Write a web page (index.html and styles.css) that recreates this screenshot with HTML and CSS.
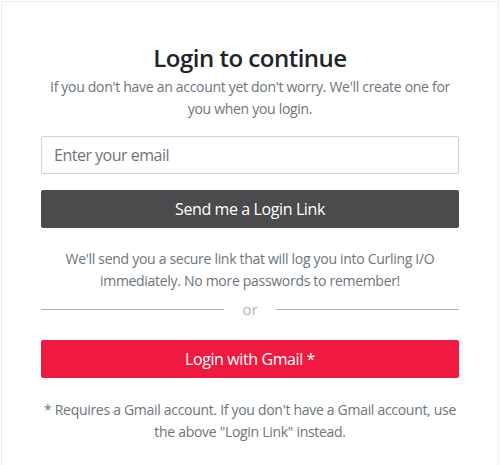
FILE: index.html
```html
<!DOCTYPE html>
<html lang="en">
<head>
<meta charset="utf-8">
<title>Login</title>
<link rel="stylesheet" href="styles.css">
</head>
<body>
<div class="card">
  <div class="login">
    <h1 class="title">Login to continue</h1>
    <p class="lead">If you don't have an account yet don't worry. We'll create one for you when you login.</p>
    <input class="email" type="email" placeholder="Enter your email">
    <button class="btn btn-dark" type="button">Send me a Login Link</button>
    <p class="note">We'll send you a secure link that will log you into Curling I/O immediately. No more passwords to remember!</p>
    <div class="divider"><span class="line"></span><span class="or">or</span><span class="line"></span></div>
    <button class="btn btn-red" type="button">Login with Gmail *</button>
    <p class="note foot">* Requires a Gmail account. If you don't have a Gmail account, use the above "Login Link" instead.</p>
  </div>
</div>
</body>
</html>
```
FILE: styles.css
```css
html, body {
  margin: 0;
  padding: 0;
  background: #ffffff;
}
body {
  padding: 1px 2px 0 1px;
  font-family: "Segoe UI", "Open Sans", "Noto Sans", sans-serif;
  color: #6c757d;
}
.card {
  border: 1px solid #e9ecef;
  border-bottom: none;
  height: 470px;
  box-sizing: border-box;
}
.login {
  width: 418px;
  margin: 0 auto;
  padding-top: 41px;
  display: flex;
  flex-direction: column;
  text-align: center;
}
.title {
  margin: 0 0 4px;
  font-size: 24px;
  line-height: 29px;
  font-weight: 600;
  letter-spacing: -0.5px;
  color: #212529;
}
.lead {
  margin: 0 0 16px;
  font-size: 14px;
  line-height: 22px;
  letter-spacing: -0.3px;
}
.email {
  height: 38px;
  box-sizing: border-box;
  border: 1px solid #ced4da;
  border-radius: 2px;
  padding: 0 12px;
  font-family: inherit;
  font-size: 16px;
  letter-spacing: -0.5px;
  color: #495057;
  margin: 0 0 16px;
  outline: none;
}
.email::placeholder {
  color: #6c757d;
}
.btn {
  height: 38px;
  border: none;
  border-radius: 2px;
  color: #ffffff;
  font-family: inherit;
  font-size: 16px;
  letter-spacing: -0.4px;
  cursor: pointer;
}
.btn-dark {
  background: #4b4b4d;
}
.btn-red {
  background: #f01a41;
}
.note {
  margin: 20px 0 6px;
  font-size: 14px;
  line-height: 22px;
  letter-spacing: -0.3px;
}
.divider {
  display: flex;
  align-items: center;
  gap: 16px;
  height: 22px;
  margin-bottom: 20px;
}
.line {
  flex: 1;
  height: 1px;
  background: #adb5bd;
}
.or {
  font-size: 15px;
  line-height: 22px;
  color: #adb5bd;
  padding: 0 2px;
}
.foot {
  margin-top: 21px;
}
```
